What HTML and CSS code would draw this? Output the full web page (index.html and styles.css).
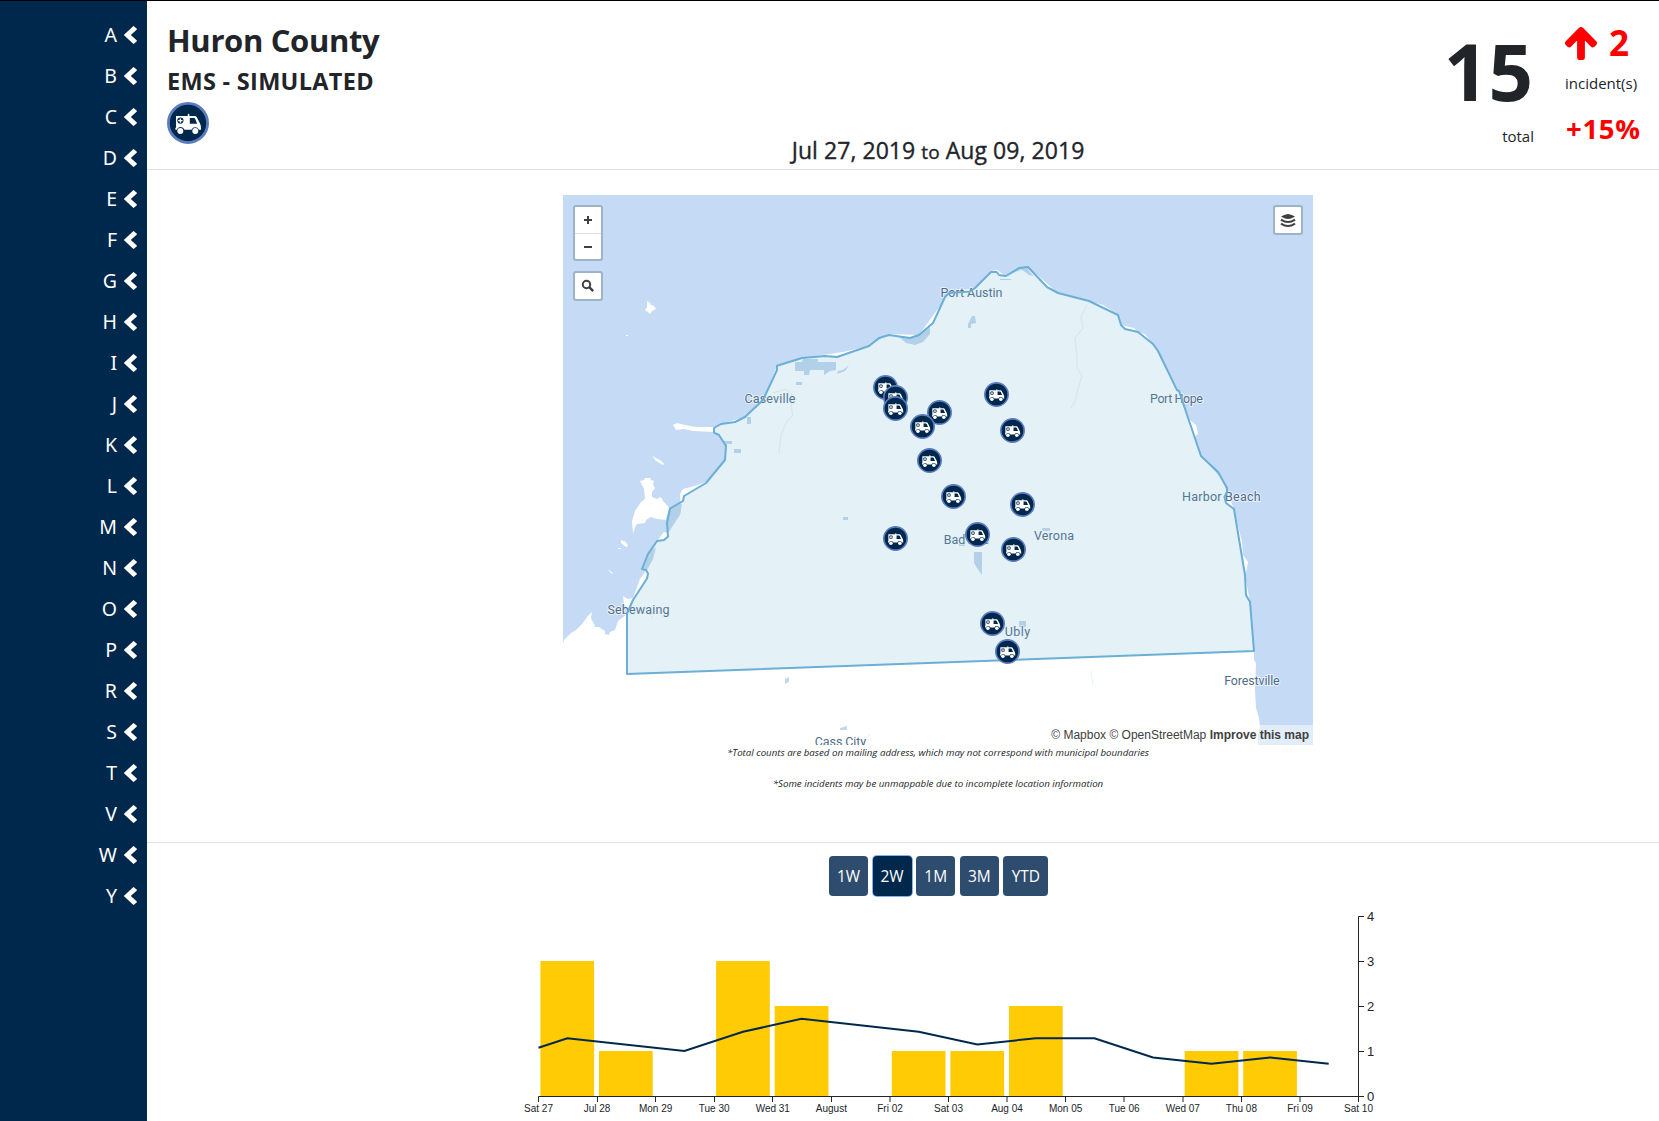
FILE: index.html
```html
<!DOCTYPE html>
<html lang="en">
<head>
<meta charset="utf-8">
<title>Huron County - EMS</title>
<link rel="stylesheet" href="styles.css">
</head>
<body>
<svg class="defs" width="0" height="0" aria-hidden="true">
  <symbol id="ems" viewBox="0 0 42 42">
    <circle cx="21" cy="21" r="19.6" fill="#00274c" stroke="#5b7cc0" stroke-width="2.8"/>
    <path fill="#fff" d="M9 14h11.8v-1.4a.8.8 0 0 1 1.6 0V14h5.4q1.4 0 2 1.2l3.2 6.2q1 2 1 5v1.400h-2.100a4 4 0 0 0-7.400 0h-7a4 4 0 0 0-7.600 0H8.400v-2h.6z"/>
    <path fill="#00274c" d="M22.800 16h4.200q.800 0 1.100.700l2.100 5H22.800z"/>
    <circle cx="13.400" cy="18.600" r="3.100" fill="#00274c"/>
    <path fill="#fff" d="M12.700 16.400h1.400v1.500h1.500v1.400h-1.500v1.500h-1.400v-1.500h-1.500v-1.400h1.500z"/>
    <circle cx="13.300" cy="29" r="3" fill="#fff"/>
    <circle cx="28.300" cy="29" r="3" fill="#fff"/>
  </symbol>
  <symbol id="chev" viewBox="0 0 13 18"><path fill="#fff" d="M.3 9.600a.8.8 0 0 1 0-1.200L8.900.400q.7-.6 1.300 0l2.400 2.200q.6.600 0 1.200L6.800 9l5.800 5.200q.6.600 0 1.200l-2.400 2.200q-.6.600-1.300 0z"/></symbol>
</svg>
<div class="app">
  <nav class="sidebar">
    <a>A<svg><use href="#chev"/></svg></a>
    <a>B<svg><use href="#chev"/></svg></a>
    <a>C<svg><use href="#chev"/></svg></a>
    <a>D<svg><use href="#chev"/></svg></a>
    <a>E<svg><use href="#chev"/></svg></a>
    <a>F<svg><use href="#chev"/></svg></a>
    <a>G<svg><use href="#chev"/></svg></a>
    <a>H<svg><use href="#chev"/></svg></a>
    <a>I<svg><use href="#chev"/></svg></a>
    <a>J<svg><use href="#chev"/></svg></a>
    <a>K<svg><use href="#chev"/></svg></a>
    <a>L<svg><use href="#chev"/></svg></a>
    <a>M<svg><use href="#chev"/></svg></a>
    <a>N<svg><use href="#chev"/></svg></a>
    <a>O<svg><use href="#chev"/></svg></a>
    <a>P<svg><use href="#chev"/></svg></a>
    <a>R<svg><use href="#chev"/></svg></a>
    <a>S<svg><use href="#chev"/></svg></a>
    <a>T<svg><use href="#chev"/></svg></a>
    <a>V<svg><use href="#chev"/></svg></a>
    <a>W<svg><use href="#chev"/></svg></a>
    <a>Y<svg><use href="#chev"/></svg></a>
  </nav>
  <main class="main">
    <header class="header">
      <div class="titles">
        <h1>Huron County</h1>
        <h2>EMS - SIMULATED</h2>
        <svg class="badge"><use href="#ems"/></svg>
      </div>
      <div class="dates">Jul 27, 2019 <small>to</small> Aug 09, 2019</div>
      <div class="stats">
        <div class="total"><strong>15</strong><span>total</span></div>
        <div class="change">
          <div class="delta"><svg viewBox="0 0 448 512"><path d="M34.900 289.500l-22.200-22.200c-9.400-9.400-9.400-24.600 0-33.900L207 39c9.400-9.400 24.600-9.400 33.900 0l194.300 194.300c9.400 9.400 9.400 24.600 0 33.900L413 289.400c-9.500 9.500-25 9.300-34.300-.4L264 168.600V456c0 13.300-10.700 24-24 24h-32c-13.300 0-24-10.700-24-24V168.600L69.200 289.100c-9.300 9.800-24.800 10-34.300.4z"/></svg><b>2</b></div>
          <span class="unit">incident(s)</span>
          <b class="percent">+15%</b>
        </div>
      </div>
    </header>

    <section class="map-section">
      <div class="map">
        <svg class="canvas" viewBox="563 195 750 550">
          <rect x="563" y="195" width="750" height="550" fill="#c4daf5"/>
          <g fill="#fff">
            <path d="M564 640L571 633 576 630 582 624 588 616 592 612 591 618 594 624 595 627 599 627 602 629 605 631 605 634 609 635 610 632 615 630 618 621 627 614 633 598 640 579 645 572 653 550 657 541 664 532 668 533 680 515 681 509 680 494 683 489 691 487 700 484 706 482 725 460 726 446 719 435 714 432 693 431 684 429 676 430 673 425 677 423 685 425 696 427 714 427 721 424 745 417 763 400 777 366 802 358 843 352 869 346 889 334 919 335 940 306 949 293 975 288 991 271 997 270 1006 276 1028 267 1058 293 1103 305 1118 314 1121 325 1134 328 1138 332 1145 334 1158 351 1179 391 1190 420 1196 425 1198 434 1195 436 1201 456 1222 479 1227 492 1234 509 1242 542 1243 555 1248 562 1247 568 1245 575 1250 602 1254 651 1254 660 1256 663 1255 690 1256 708 1259 718 1260 727 1258 735 1258 745 563 745 563 643z"/>
            <path d="M647 301l3 2 1 2 3 1 2 3-4 2-2 3-2-2-3-2 2-3zM626 335h2v1h-2zM652 456l4 2 4 2 4 4-1 1-7-4zM640 481l4-1 1-2h5l1 2 3 1-1 4 2 3-3 4v5l5 2 4-2 2 4 5 5 1 3-3 11-9-1-6-2-5 3-1 3-8 1-2 3-2 7-1-13 3-10 6-9 4-3-1-10zM621 540l5 2 2 4-2 1-5-4zM618 548h3v1h-3zM607 569l6 4-1 1zM623 596l5 3 5-1-5 11-4-5z"/>
          </g>
          <g fill="#c2d8f0">
            <path d="M899 337L910 338 919 335 930 327 930 334 923 342 915 345 906 343zM795 362h7l1-3h15v3h18v8l-6 1-6 4v-5h-14l-1 5h-5v-4h-9zM838 371l5-1 6-5-4 6-8 3zM796 382h6v3h-6zM747 417h4v7h-4zM734 449h7v4h-7zM724 441h8v3h-5v3h-4zM1000 279h11v1h-11zM968 324l4-8h3l1 7-5 1v4h-3zM1021 269l6-1 6 8-4-1zM843 517h5v3h-5zM959 543l6-1v4h-6zM974 552h8v23l-5-7-3-5zM1042 528h8v3h-8zM1019 621h7v6h-7zM785 679l4-2v5l-4 2zM840 728l7-2v4h-7zM667 534l-1-16 4-10 12-4-2 10-7 7-3 9zM643 569l6-15 7-7-3 12-6 11z"/>
          </g>
          <g fill="none" stroke="#e9f1fa" stroke-width="1">
            <path d="M773 393l13-4 6 6-1 12 2 8-7 8-5 12-2 18M1087 305l-6 12 2 11-8 10 2 18 0 11 5 9-4 13-3 12-4 7M1091 671l2 14M650 614l3 5M864 739l7-5"/>
          </g>
          <g class="places">
            <text x="971.500" y="296.500" textLength="62">Port Austin</text>
            <text x="770" y="403" textLength="51">Caseville</text>
            <text x="1176.500" y="403" textLength="53">Port Hope</text>
            <text x="1221.300" y="500.500" textLength="78.500">Harbor Beach</text>
            <text x="966.500" y="543.500" textLength="45.500">Bad Axe</text>
            <text x="1054" y="539.500" textLength="40">Verona</text>
            <text x="1017.500" y="636" textLength="25.500">Ubly</text>
            <text x="1252" y="684.500" textLength="55.500">Forestville</text>
            <text x="638.500" y="614" textLength="62">Sebewaing</text>
            <text x="840.500" y="746" textLength="51.500">Cass City</text>
          </g>
          <path class="county" d="M627 674L627 613.500 633 600 647 578.500 648 573.500 646 570 642 569 648 554 657 541 664 540 668 536.500 667 523 670 508.500 683 501 684 496 706 483 725 460 726 446 719 435 714 432.700 714 428 721 424 735 422 745 417 763 400 777 370 777 365.700 802 358 825 356 837 357 869 346 879 338 889 335 910 338 919 335 933 323 945 297 949 293 970 291.500 975 288 991 272 996.700 272 999 275 1006 276 1019 268 1028 267 1047 287 1058 293 1089 301 1118 315 1121 325 1125 329 1138 332 1153 344 1158 351 1177 390 1179 391 1201 456 1218 472 1227 488 1227 492 1224.500 497 1226 503 1234 509 1245 575 1246 595 1250 602 1254 651z"/>
          <g class="markers">
            <use href="#ems" x="873" y="375" width="25" height="25"/>
            <use href="#ems" x="883" y="385" width="25" height="25"/>
            <use href="#ems" x="883" y="396" width="25" height="25"/>
            <use href="#ems" x="984" y="382" width="25" height="25"/>
            <use href="#ems" x="927" y="400" width="25" height="25"/>
            <use href="#ems" x="910" y="414" width="25" height="25"/>
            <use href="#ems" x="1000" y="418" width="25" height="25"/>
            <use href="#ems" x="917" y="448" width="25" height="25"/>
            <use href="#ems" x="941" y="484" width="25" height="25"/>
            <use href="#ems" x="1010" y="492" width="25" height="25"/>
            <use href="#ems" x="965" y="522" width="25" height="25"/>
            <use href="#ems" x="883" y="526" width="25" height="25"/>
            <use href="#ems" x="1001" y="537" width="25" height="25"/>
            <use href="#ems" x="980" y="611" width="25" height="25"/>
            <use href="#ems" x="995" y="639" width="25" height="25"/>
          </g>
        </svg>
        <div class="controls">
          <div class="control"><i><svg viewBox="0 0 26 26"><path d="M9 13h8M13 9v8"/></svg></i><i><svg viewBox="0 0 26 26"><path d="M9 13h8"/></svg></i></div>
          <div class="control"><i><svg viewBox="0 0 26 26"><circle cx="11.500" cy="11.500" r="3.700"/><path d="M14.200 14.200l4 4" stroke-width="2.400"/></svg></i></div>
        </div>
        <div class="control layers"><i><svg viewBox="0 0 26 26"><path class="solid" d="M6 9.500q4-2.500 7-2.500t7 2.500q-4 2.500-7 2.500t-7-2.500z"/><path d="M6 12.600q3.500 2.400 7 2.400t7-2.400M6 16.600q3.500 2.400 7 2.400t7-2.400"/></svg></i></div>
        <div class="attribution">© Mapbox © OpenStreetMap <b>Improve this map</b></div>
      </div>
      <p class="note">*Total counts are based on mailing address, which may not correspond with municipal boundaries</p>
      <p class="note second">*Some incidents may be unmappable due to incomplete location information</p>
    </section>

    <section class="chart-section">
      <div class="ranges">
        <button>1W</button><button class="active">2W</button><button>1M</button><button>3M</button><button class="wide">YTD</button>
      </div>
      <svg class="chart" viewBox="518 906 868 215">
        <g fill="#ffcb05">
          <rect x="540.400" y="961" width="53.700" height="135"/>
          <rect x="599" y="1051" width="53.700" height="45"/>
          <rect x="716.100" y="961" width="53.700" height="135"/>
          <rect x="774.700" y="1006" width="53.700" height="90"/>
          <rect x="891.800" y="1051" width="53.700" height="45"/>
          <rect x="950.400" y="1051" width="53.700" height="45"/>
          <rect x="1009" y="1006" width="53.700" height="90"/>
          <rect x="1184.700" y="1051" width="53.700" height="45"/>
          <rect x="1243.200" y="1051" width="53.700" height="45"/>
        </g>
        <path fill="none" stroke="#00274c" stroke-width="2" d="M538.500 1047.700L567.300 1038.300 684.400 1051 743 1031.800 801.500 1018.800 918.700 1031.800 977.300 1044.600 1035.800 1038.200 1094.400 1038.200 1153 1057.400 1211.500 1063.800 1270.100 1057.400 1328.700 1063.800"/>
        <g class="axis">
          <path d="M538.500 1102V1096.500H1358.500V1102M597.500 1096v6M655.500 1096v6M714.500 1096v6M772.500 1096v6M831.500 1096v6M890 1096v6M948.500 1096v6M1007 1096v6M1065.500 1096v6M1124 1096v6M1183 1096v6M1241.500 1096v6M1300 1096v6"/>
          <path d="M1364 916.500H1358.500V1096.500H1364M1358 961.500h6M1358 1006.500h6M1358 1051.500h6"/>
        </g>
        <g class="xlabels">
          <text x="538.500" y="1112">Sat 27</text><text x="597" y="1112">Jul 28</text><text x="655.600" y="1112">Mon 29</text><text x="714.200" y="1112">Tue 30</text><text x="772.800" y="1112">Wed 31</text><text x="831.400" y="1112">August</text><text x="890" y="1112">Fri 02</text><text x="948.500" y="1112">Sat 03</text><text x="1007" y="1112">Aug 04</text><text x="1065.600" y="1112">Mon 05</text><text x="1124.200" y="1112">Tue 06</text><text x="1182.800" y="1112">Wed 07</text><text x="1241.400" y="1112">Thu 08</text><text x="1300" y="1112">Fri 09</text><text x="1358.500" y="1112">Sat 10</text>
        </g>
        <g class="ylabels">
          <text x="1367" y="921">4</text><text x="1367" y="966">3</text><text x="1367" y="1011">2</text><text x="1367" y="1056">1</text><text x="1367" y="1101">0</text>
        </g>
      </svg>
    </section>
  </main>
</div>
</body>
</html>
```
FILE: styles.css
```css
* { box-sizing: border-box; }
body { margin: 0; background: #fff; color: #212529; font-family: "Open Sans", "Noto Sans", sans-serif; font-size: 16px; line-height: 1.5; }
.defs { display: block; }
.app { display: flex; height: 1121px; border-top: 1px solid #000; overflow: hidden; }

.sidebar { width: 147px; flex: none; background: #00274c; padding: 13px 10px 0 0; display: flex; flex-direction: column; }
.sidebar a { display: flex; height: 41px; flex: none; align-items: center; justify-content: flex-end; gap: 7px; color: #fff; font-size: 19.500px; font-family: "Noto Sans", sans-serif; line-height: 41px; }
.sidebar svg { width: 13px; height: 18px; }

.main { flex: 1; min-width: 0; display: flex; flex-direction: column; }
.header { height: 169px; flex: none; border-bottom: 1px solid #dee2e6; display: grid; grid-template-columns: 416px 750px 346px; }
.titles { padding: 19px 0 0 20px; display: flex; flex-direction: column; align-items: flex-start; }
h1, h2 { margin: 0; font-weight: 700; white-space: nowrap; }
h1 { font-size: 31px; line-height: 40px; letter-spacing: -.35px; }
h2 { font-size: 23.500px; line-height: 30px; margin-top: 6px; letter-spacing: .3px; }
.badge { width: 42px; height: 42px; margin-top: 6px; }
.dates { align-self: end; text-align: center; font-size: 23px; line-height: 30px; padding-bottom: 2px; white-space: nowrap; letter-spacing: .06px; -webkit-text-stroke: .35px #212529; }
.dates small { font-size: 19px; }
.stats { display: flex; justify-content: flex-end; white-space: nowrap; }
.total { display: flex; flex-direction: column; align-items: flex-end; padding-top: 20px; }
.total strong { font-size: 78px; line-height: 100px; padding-right: 1px; }
.total span { font-size: 15px; line-height: 24px; margin-top: 3px; }
.change { width: 125px; padding: 20px 0 0 31px; display: flex; flex-direction: column; align-items: flex-start; }
.delta { display: flex; align-items: center; gap: 12px; height: 45px; color: #f00; font-size: 35px; }
.delta svg { width: 32px; height: 35px; fill: #f00; stroke: #f00; stroke-width: 34; overflow: visible; }
.unit { font-size: 15px; line-height: 24px; margin-top: 5px; }
.percent { color: #f00; font-size: 27.500px; line-height: 36px; margin-top: 16px; padding-left: 1px; letter-spacing: .7px; }

.map-section { height: 673px; flex: none; padding: 25px 0 0 416px; border-bottom: 1px solid #dee2e6; }
.map { position: relative; width: 750px; height: 550px; overflow: hidden; }
.canvas { display: block; width: 750px; height: 550px; }
.places text { font: 400 12.500px Roboto, sans-serif; fill: #506b88; stroke: #fff; stroke-opacity: .6; stroke-width: 2px; paint-order: stroke; text-anchor: middle; }
.county { fill: #6bafcd; fill-opacity: .18; stroke: #6baed6; stroke-width: 2; stroke-linejoin: round; }
.controls { position: absolute; left: 10px; top: 10px; display: flex; flex-direction: column; gap: 10px; }
.control { width: 30px; border: 2px solid #9eb2c8; border-radius: 3px; background: #fff; }
.control i { display: block; height: 26px; }
.control i + i { border-top: 1px solid #ddd; }
.control svg { display: block; width: 26px; height: 26px; fill: none; stroke: #404040; stroke-width: 2; }
.control .solid { fill: #404040; stroke: none; }
.layers { position: absolute; right: 10px; top: 10px; }
.attribution { position: absolute; right: 0; bottom: 0; height: 20px; padding: 0 4px 0 5px; background: rgba(255,255,255,.5); color: #404040; font: 12px/20px "Liberation Sans", Arial, sans-serif; white-space: nowrap; }
.note { margin: 0; width: 750px; text-align: center; font-size: 9.700px; font-style: italic; line-height: 16px; }
.note.second { margin-top: 15px; }

.chart-section { padding: 13px 0 0 371px; }
.ranges { display: flex; gap: 4.600px; padding-left: 311px; }
.ranges button { width: 39px; height: 40px; padding: 0; border: 0; border-radius: 4px; background: #2e4c6e; color: #fff; font: 15.500px "Open Sans", sans-serif; }
.ranges .wide { width: 45px; }
.ranges .active { background: #00274c; box-shadow: 0 0 0 1px #86b0f2; }
.chart { display: block; width: 868px; height: 215px; margin-top: 10px; }
.axis path { fill: none; stroke: #212529; stroke-width: 1; }
.xlabels text { font: 10px "Liberation Sans", Arial, sans-serif; fill: #212529; text-anchor: middle; }
.ylabels text { font: 13px "Liberation Sans", Arial, sans-serif; fill: #212529; }
```
